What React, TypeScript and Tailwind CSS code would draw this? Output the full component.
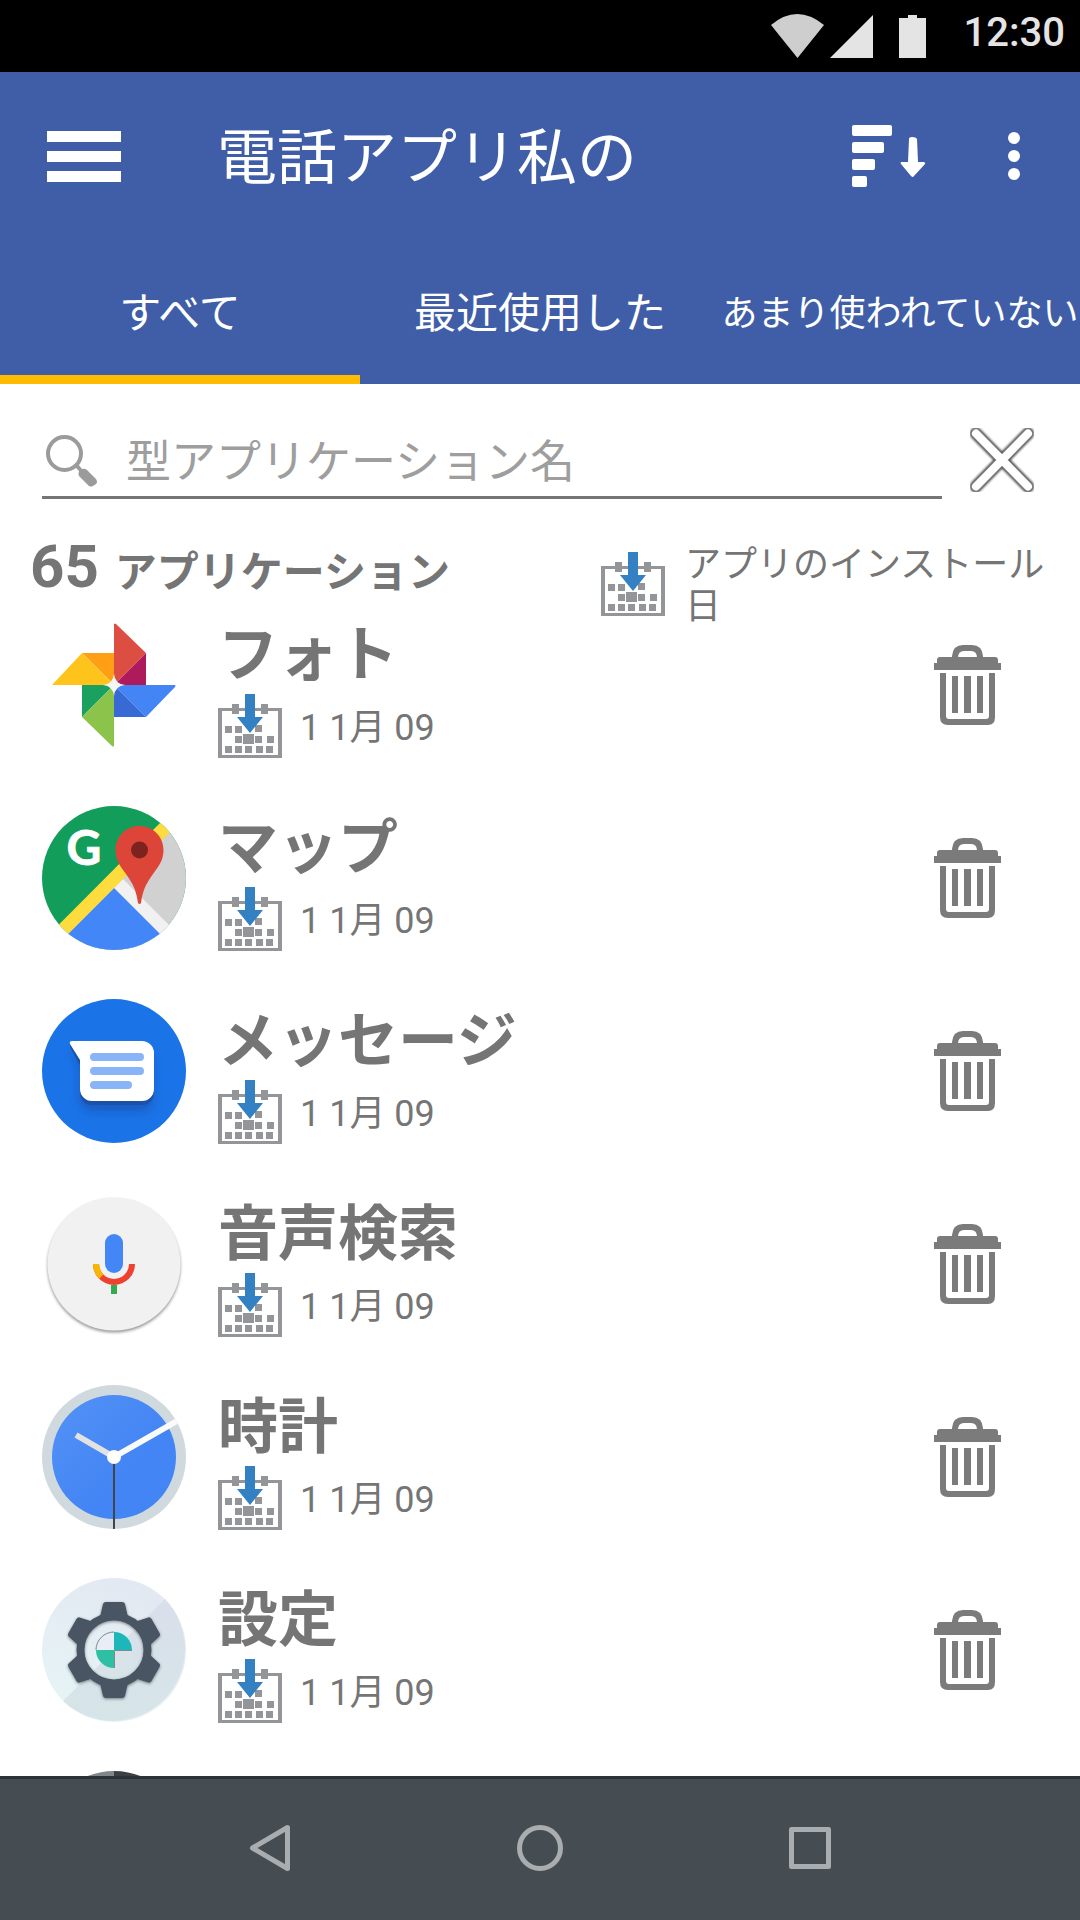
import React, { useState } from 'react';

interface AppItem {
  id: string;
  name: string;
  installed: string;
  icon: React.ReactNode;
}

function PhotosIcon() {
  return (
    <svg viewBox="0 0 144 144" className="size-36">
      <path d="M40 40H72V72Z" fill="#fe9f16" />
      <path d="M10 72 40 40 72 72Z" fill="#fec41c" />
      <path d="M72 72V11q1-1 2 0L104 40Z" fill="#dc4e41" />
      <path d="M72 72 104 40V72Z" fill="#ae1a5b" />
      <path d="M72 72H133q1 1 0 2L104 104Z" fill="#4385f5" />
      <path d="M72 72 104 104H72Z" fill="#386ad6" />
      <path d="M40 72H72L40 104Z" fill="#1ba15f" />
      <path d="M72 72V133q-1 1-2 0L40 104Z" fill="#8bc34b" />
      <path d="M72 61 Q73 71 83 72 Q73 73 72 83 Q71 73 61 72 Q71 71 72 61Z" fill="#f5f5f5" />
    </svg>
  );
}

function MapsIcon() {
  return (
    <svg viewBox="0 0 144 144" className="size-36">
      <clipPath id="maps-clip">
        <circle cx="72" cy="72" r="72" />
      </clipPath>
      <g clipPath="url(#maps-clip)">
        <rect width="144" height="144" fill="#129e5a" />
        <path d="M144 0V144H0Z" fill="#d1d1d1" />
        <path d="M72 82 81 73 144 136V154Z" fill="#f1f1f1" />
        <path d="M72 82 144 154H0Z" fill="#4386f7" />
        <path d="M8 127.500 127 8 136 18 17 137Z" fill="#ffdc3d" />
      </g>
      <path
        d="M97.500 20C84 20 73.500 30.500 73.500 44C73.500 54 78 60 84 68C92 79 94.500 86 96 97Q97.500 99 99 97C100.500 86 103 79 111 68C117 60 121.500 54 121.500 44C121.500 30.500 111 20 97.500 20Z"
        fill="#dd4539"
      />
      <circle cx="97.500" cy="44" r="8.500" fill="#7c231f" />
      <text x="42" y="59" textAnchor="middle" fontFamily="Lato, sans-serif" fontWeight="700" fontSize="48" fill="#fff" stroke="#fff" strokeWidth=".8">
        G
      </text>
    </svg>
  );
}

function MessagesIcon() {
  return (
    <svg viewBox="0 0 144 144" className="size-36">
      <filter id="msg-blur" x="-30%" y="-30%" width="160%" height="160%">
        <feGaussianBlur stdDeviation="5" />
      </filter>
      <circle cx="72" cy="72" r="72" fill="#1b73e8" />
      <path d="M30 52H99a12 12 0 0 1 12 12V100a12 12 0 0 1-12 12H50a12 12 0 0 1-12-12V68Z" fill="#174ea6" opacity=".6" filter="url(#msg-blur)" />
      <path d="M28 44V48L38 66V94a12 12 0 0 0 12 12H100a12 12 0 0 0 12-12V54Z" fill="#1b52a8" />
      <path d="M30 42H100a12 12 0 0 1 12 12V90a12 12 0 0 1-12 12H50a12 12 0 0 1-12-12V61L28 45Q27 42 30 42Z" fill="#fff" />
      <path d="M52 58H98M52 72H98M52 86H86" stroke="#8ab4f8" strokeWidth="8" strokeLinecap="round" />
    </svg>
  );
}

function VoiceIcon() {
  return (
    <svg viewBox="0 0 144 144" className="size-36">
      <filter id="voice-shadow" x="-10%" y="-10%" width="120%" height="120%">
        <feGaussianBlur stdDeviation="1.500" />
      </filter>
      <circle cx="72" cy="74" r="66.500" fill="#000" opacity=".4" filter="url(#voice-shadow)" />
      <circle cx="72" cy="72" r="66.500" fill="#f1f1f1" />
      <rect x="63" y="42" width="18" height="39" rx="9" fill="#4387f7" />
      <path d="M54 72A18 18 0 0 0 90 72" fill="none" stroke="#ee4130" strokeWidth="6" />
      <path d="M54 72A18 18 0 0 0 59.300 84.700" fill="none" stroke="#f8b600" strokeWidth="6" />
      <rect x="69" y="93" width="6" height="9" fill="#33ab51" />
    </svg>
  );
}

function ClockIcon() {
  return (
    <svg viewBox="0 0 144 144" className="size-36">
      <defs>
        <linearGradient id="clock-face" x1="0" y1="0" x2="1" y2="1">
          <stop offset="0" stopColor="#5492f6" />
          <stop offset=".6" stopColor="#4385f4" />
        </linearGradient>
        <clipPath id="clock-clip">
          <circle cx="72" cy="72" r="72" />
        </clipPath>
      </defs>
      <circle cx="72" cy="72" r="72" fill="#d0d9dd" />
      <circle cx="72" cy="72" r="62" fill="url(#clock-face)" />
      <g clipPath="url(#clock-clip)" fill="none">
        <path d="M72 72 34 50" stroke="#e2e2e2" strokeWidth="6" />
        <path d="M72 72 135 36" stroke="#fafafa" strokeWidth="6" />
        <path d="M72 72V144" stroke="#424448" strokeWidth="2" />
      </g>
      <circle cx="72" cy="72" r="7" fill="#fdfdfd" />
    </svg>
  );
}

const teeth = [0, 60, 120, 180, 240, 300];

function SettingsIcon() {
  return (
    <svg viewBox="0 0 144 144" className="size-36">
      <defs>
        <linearGradient id="set-light" x1="0" y1="1" x2=".4" y2="0">
          <stop offset="0" stopColor="#e7f6f6" />
          <stop offset="1" stopColor="#e3e9f2" />
        </linearGradient>
        <linearGradient id="set-dark" x1="0" y1="1" x2="0" y2="0">
          <stop offset="0" stopColor="#d6e5e8" />
          <stop offset="1" stopColor="#d9dfeb" />
        </linearGradient>
        <filter id="set-shadow" x="-20%" y="-20%" width="140%" height="140%">
          <feDropShadow dx="0" dy="1" stdDeviation="1.500" floodOpacity=".45" />
        </filter>
      </defs>
      <circle cx="72" cy="72" r="72" fill="url(#set-light)" />
      <path d="M122.900 21.100A72 72 0 0 1 21.100 122.900Z" fill="url(#set-dark)" />
      <g filter="url(#set-shadow)">
        <circle cx="72" cy="72" r="33.500" fill="none" stroke="#485562" strokeWidth="8" />
        {teeth.map((angle) => (
          <path
            key={angle}
            d="M58 39 61 26Q61.500 24 64 24H80Q82.500 24 83 26L86 39Q72 34 58 39Z"
            fill="#485562"
            transform={`rotate(${angle} 72 72)`}
          />
        ))}
      </g>
      <circle cx="72" cy="72" r="18" fill="#e8eef3" />
      <path d="M72 72H90A18 18 0 0 1 72 90Z" fill="#dae3e9" />
      <path d="M72 54A18 18 0 0 1 90 72H72Z" fill="#1db6b9" />
      <path d="M72 90A18 18 0 0 1 54 72H72Z" fill="#2fbfa5" />
      <path d="M54 72A18 18 0 0 1 72 54M72.500 90V72.500H90" fill="none" stroke="#7f8a8d" strokeWidth="1" />
    </svg>
  );
}

function PartialIcon() {
  return (
    <svg viewBox="0 0 144 144" className="size-36">
      <path d="M72 0A72 72 0 0 0 72 144Z" fill="#80868b" />
      <path d="M72 0A72 72 0 0 1 72 144Z" fill="#3c4043" />
    </svg>
  );
}

function InstallDateIcon() {
  return (
    <svg viewBox="0 0 64 64" className="size-16 shrink-0">
      <path d="M0 14H64V64H0ZM4 17V61H60V17Z" fill="#939598" fillRule="evenodd" />
      <path
        d="M14 10h7v10h-7ZM43 10h7v10h-7ZM7 32h7v7H7ZM17 32h7v7h-7ZM37 31h7v7h-7ZM17 42h7v7h-7ZM25 40h11v10H25ZM37 42h7v7h-7ZM49 42h7v7h-7ZM7 52h7v7H7ZM17 52h7v7h-7ZM27 52h7v7h-7ZM38 52h7v7h-7ZM48 52h7v7h-7Z"
        fill="#939598"
      />
      <path d="M27 0H37V23H45L32 39 19 23H27Z" fill="#3380c2" />
    </svg>
  );
}

function TrashIcon() {
  return (
    <svg viewBox="0 0 67 80" className="h-20 w-[67px]" fill="#7b7b7b">
      <path d="M18 13V11Q19 0 29 0H38Q48 0 49 11V13H43Q43 6 37 6H30Q24 6 24 13Z" />
      <path d="M3 18V15Q3 12 6 12H61Q64 12 64 15V18H67V25H0V18Z" />
      <path d="M6 28H12V71Q12 74 15 74H52Q55 74 55 71V28H61V72Q61 80 54 80H14Q6 80 6 72Z" />
      <path d="M18 31h6v37h-6ZM30 31h7v37h-7ZM43 31h6v37h-6Z" />
    </svg>
  );
}

function StatusBar() {
  return (
    <div className="flex h-[72px] shrink-0 items-center justify-end bg-black pr-[15px] text-[#e4e4e4]">
      <svg viewBox="0 0 160 48" className="mr-9 h-12 w-40">
        <path d="M3 14Q29-8 56 14L29.500 47Z" fill="#cecece" transform="translate(0 -1)" />
        <path d="M105 3V46H62Z" fill="currentColor" />
        <path d="M140 3h9v3h9v40h-27V6h9Z" fill="currentColor" />
      </svg>
      <span className="-mt-1.5 text-[40px] leading-[48px] font-medium">12:30</span>
    </div>
  );
}

const tabs = [
  { label: 'すべて', size: 'text-[42px]' },
  { label: '最近使用した', size: 'text-[42px]' },
  { label: 'あまり使われていない', size: 'text-[36px]' },
];

const apps: AppItem[] = [
  { id: 'photos', name: 'フォト', installed: '1 1月 09', icon: <PhotosIcon /> },
  { id: 'maps', name: 'マップ', installed: '1 1月 09', icon: <MapsIcon /> },
  { id: 'messages', name: 'メッセージ', installed: '1 1月 09', icon: <MessagesIcon /> },
  { id: 'voice', name: '音声検索', installed: '1 1月 09', icon: <VoiceIcon /> },
  { id: 'clock', name: '時計', installed: '1 1月 09', icon: <ClockIcon /> },
  { id: 'settings', name: '設定', installed: '1 1月 09', icon: <SettingsIcon /> },
];

function AppRow({ item }: { item: AppItem }) {
  return (
    <li className="mb-12 flex h-[145px] items-start">
      {item.icon}
      <div className="ml-8 flex-1">
        <h2 className="pt-[5px] text-[60px] leading-[76px] font-bold">{item.name}</h2>
        <div className="flex h-16 items-center gap-[18px]">
          <InstallDateIcon />
          <span className="pt-1 text-[36px] leading-[42px]">{item.installed}</span>
        </div>
      </div>
      <button aria-label={`${item.name} 削除`} className="mt-8">
        <TrashIcon />
      </button>
    </li>
  );
}

export default function App() {
  const [active, setActive] = useState(0);
  const [query, setQuery] = useState('');

  return (
    <div
      lang="ja"
      className="flex h-screen flex-col overflow-hidden bg-white font-[Roboto,'Noto_Sans_CJK_JP',sans-serif] text-[#757575]"
    >
      <StatusBar />

      <header className="shrink-0 bg-[#405ea8] text-white">
        <div className="flex h-[168px] items-center pr-[60px] pl-[47px]">
          <button aria-label="メニュー">
            <svg viewBox="0 0 74 52" className="h-[52px] w-[74px]" fill="currentColor">
              <path d="M0 1h74v11H0ZM0 21h74v11H0ZM0 41h74v11H0Z" />
            </svg>
          </button>
          <h1 className="ml-24 flex-1 pt-1.5 text-[60px] leading-[72px]">電話アプリ私の</h1>
          <button aria-label="並べ替え" className="mr-[82px]">
            <svg viewBox="0 0 74 62" className="h-[62px] w-[74px]" fill="currentColor">
              <rect width="40" height="11" rx="2" />
              <rect y="17" width="32" height="11" rx="2" />
              <rect y="34" width="23" height="11" rx="2" />
              <rect y="51" width="15" height="11" rx="2" />
              <path d="M57 14Q57 12 60 12Q64 12 65 14L66 37H72Q74 38 73 39L62 51Q61 53 59 51L49 39Q48 38 49 37H56Z" />
            </svg>
          </button>
          <button aria-label="その他">
            <svg viewBox="0 0 12 48" className="h-12 w-3" fill="currentColor">
              <circle cx="6" cy="6" r="6" />
              <circle cx="6" cy="24" r="6" />
              <circle cx="6" cy="42" r="6" />
            </svg>
          </button>
        </div>
        <nav className="grid h-36 grid-cols-3">
          {tabs.map((tab, i) => (
            <button
              key={tab.label}
              onClick={() => setActive(i)}
              className={`border-y-[9px] border-t-transparent pt-1 leading-[60px] whitespace-nowrap ${tab.size} ${
                active === i ? 'border-b-[#ffbc00]' : 'border-b-transparent'
              }`}
            >
              {tab.label}
            </button>
          ))}
        </nav>
      </header>

      <main className="flex-1 overflow-hidden">
        <div className="mt-[35px] flex items-center gap-7 pr-11 pl-[42px]">
          <label className="flex h-20 flex-1 items-center border-b-[3px] border-[#757575] pt-1.5 pl-1">
            <svg viewBox="0 0 52 52" className="size-[52px] shrink-0">
              <circle cx="18.500" cy="18.500" r="16.500" fill="none" stroke="#9b9b9b" strokeWidth="4" />
              <path
                d="M29 32 32 29 36 34Q39 33 41 35L50 44Q52 47 50 49L47 51Q45 52 43 51L33 41Q32 39 33 36Z"
                fill="#9b9b9b"
              />
            </svg>
            <input
              aria-label="型アプリケーション名"
              placeholder="型アプリケーション名"
              value={query}
              onChange={(e) => setQuery(e.target.value)}
              className="ml-7 h-[66px] min-w-0 flex-1 pt-1 text-[45px] outline-none placeholder:text-[#9e9e9e]"
            />
          </label>
          <button aria-label="クリア" onClick={() => setQuery('')}>
            <svg viewBox="0 0 66 66" className="size-[66px]" strokeLinecap="round">
              <filter id="close-blur">
                <feGaussianBlur stdDeviation="1.300" />
              </filter>
              <g transform="translate(-1 0)">
                <path d="M7 7.500 59 60.500M59 7.500 7 60.500" stroke="#222" strokeWidth="12" opacity=".85" filter="url(#close-blur)" />
                <path d="M7 7.500 59 60.500M59 7.500 7 60.500" stroke="#808080" strokeWidth="10" />
                <path d="M7 7.500 59 60.500M59 7.500 7 60.500" stroke="#fff" strokeWidth="8" />
              </g>
            </svg>
          </button>
        </div>

        {/* the sort label may wrap past this strip, next to the first row */}
        <div className="mt-[37px] flex h-[77px] items-start justify-between pl-[30px]">
          <p className="flex items-baseline gap-4 pt-px font-bold">
            <span className="text-[60px] leading-[60px]">65</span>
            <span className="text-[42px] leading-[60px]">アプリケーション</span>
          </p>
          <div className="mt-4 flex items-start gap-5">
            <InstallDateIcon />
            <span className="-mt-2 w-[395px] pr-7 text-[36px] leading-[42px]">アプリのインストール日</span>
          </div>
        </div>

        <ul className="pr-[79px] pl-[42px]">
          {apps.map((item) => (
            <AppRow key={item.id} item={item} />
          ))}
          <li>
            <PartialIcon />
          </li>
        </ul>
      </main>

      <footer className="grid h-36 shrink-0 grid-cols-3 border-t-[3px] border-[#2c3236] bg-[#454d52] px-[12.5%] pb-[3px] text-[#a9adaf]">
        <button aria-label="戻る" className="flex items-center justify-center">
          <svg viewBox="0 0 48 48" className="size-12" fill="none" stroke="currentColor" strokeWidth="5" strokeLinejoin="round">
            <path d="M41.500 3.500V44.500L6.500 24Z" />
          </svg>
        </button>
        <button aria-label="ホーム" className="flex items-center justify-center">
          <svg viewBox="0 0 48 48" className="size-12" fill="none" stroke="currentColor" strokeWidth="5">
            <circle cx="24" cy="24" r="20.500" />
          </svg>
        </button>
        <button aria-label="最近" className="flex items-center justify-center">
          <svg viewBox="0 0 48 48" className="size-12" fill="none" stroke="currentColor" strokeWidth="5" strokeLinejoin="round">
            <rect x="5.500" y="5.500" width="37" height="37" />
          </svg>
        </button>
      </footer>
    </div>
  );
}
